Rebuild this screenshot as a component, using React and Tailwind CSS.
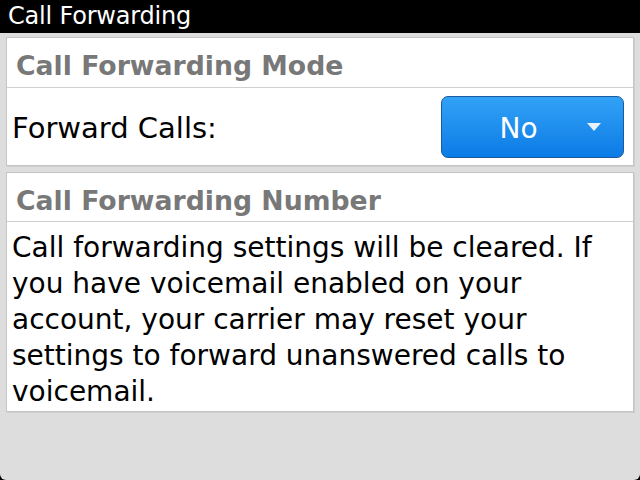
export default function App() {
  return (
    <div className="w-[640px] h-[480px] bg-black flex flex-col font-['DejaVu_Sans',sans-serif] overflow-hidden">
      <div className="h-[33px] pl-[8px] text-white text-[24px] leading-[33px] tracking-[-0.2px]">
        Call Forwarding
      </div>
      <div className="flex-1 bg-[#dddddd] rounded-b-[6px] pt-[4px] pl-[6px] pr-[6px] flex flex-col gap-[6px]">
        <div className="bg-white border border-[#c4c4c4] shadow-[1px_1px_0_#cfcfcf] flex flex-col">
          <div className="h-[50px] flex items-center pt-[8px] pl-[9px] text-[26.7px] font-bold text-[#787878] border-b border-[#d0d0d0]">
            Call Forwarding Mode
          </div>
          <div className="h-[77px] flex items-center justify-between pl-[5px] pr-[9px]">
            <span className="text-[29px] text-black pt-[5px]">Forward Calls:</span>
            <div className="relative w-[183px] h-[62px] rounded-[7px] border border-[#1b5a9c] bg-gradient-to-b from-[#31a2f6] to-[#0a7be6] flex items-center justify-center">
              <span className="text-white text-[28px] leading-none ml-[-28px] pt-[4px]">No</span>
              <svg className="absolute right-[22px] top-[26px]" width="14" height="8" viewBox="0 0 14 8">
                <polygon points="0,0 14,0 7,8" fill="#e8f3ff" />
              </svg>
            </div>
          </div>
        </div>
        <div className="bg-white border border-[#c4c4c4] shadow-[1px_1px_0_#cfcfcf] flex flex-col">
          <div className="h-[49px] flex items-center pt-[8px] pl-[9px] text-[26.7px] font-bold text-[#787878] border-b border-[#d0d0d0]">
            Call Forwarding Number
          </div>
          <div className="pl-[5px] pt-[8px] pb-[1px] text-[28px] leading-[36px] text-black whitespace-nowrap">
            Call forwarding settings will be cleared. If
            <br />
            you have voicemail enabled on your
            <br />
            account, your carrier may reset your
            <br />
            settings to forward unanswered calls to
            <br />
            voicemail.
          </div>
        </div>
      </div>
    </div>
  );
}
